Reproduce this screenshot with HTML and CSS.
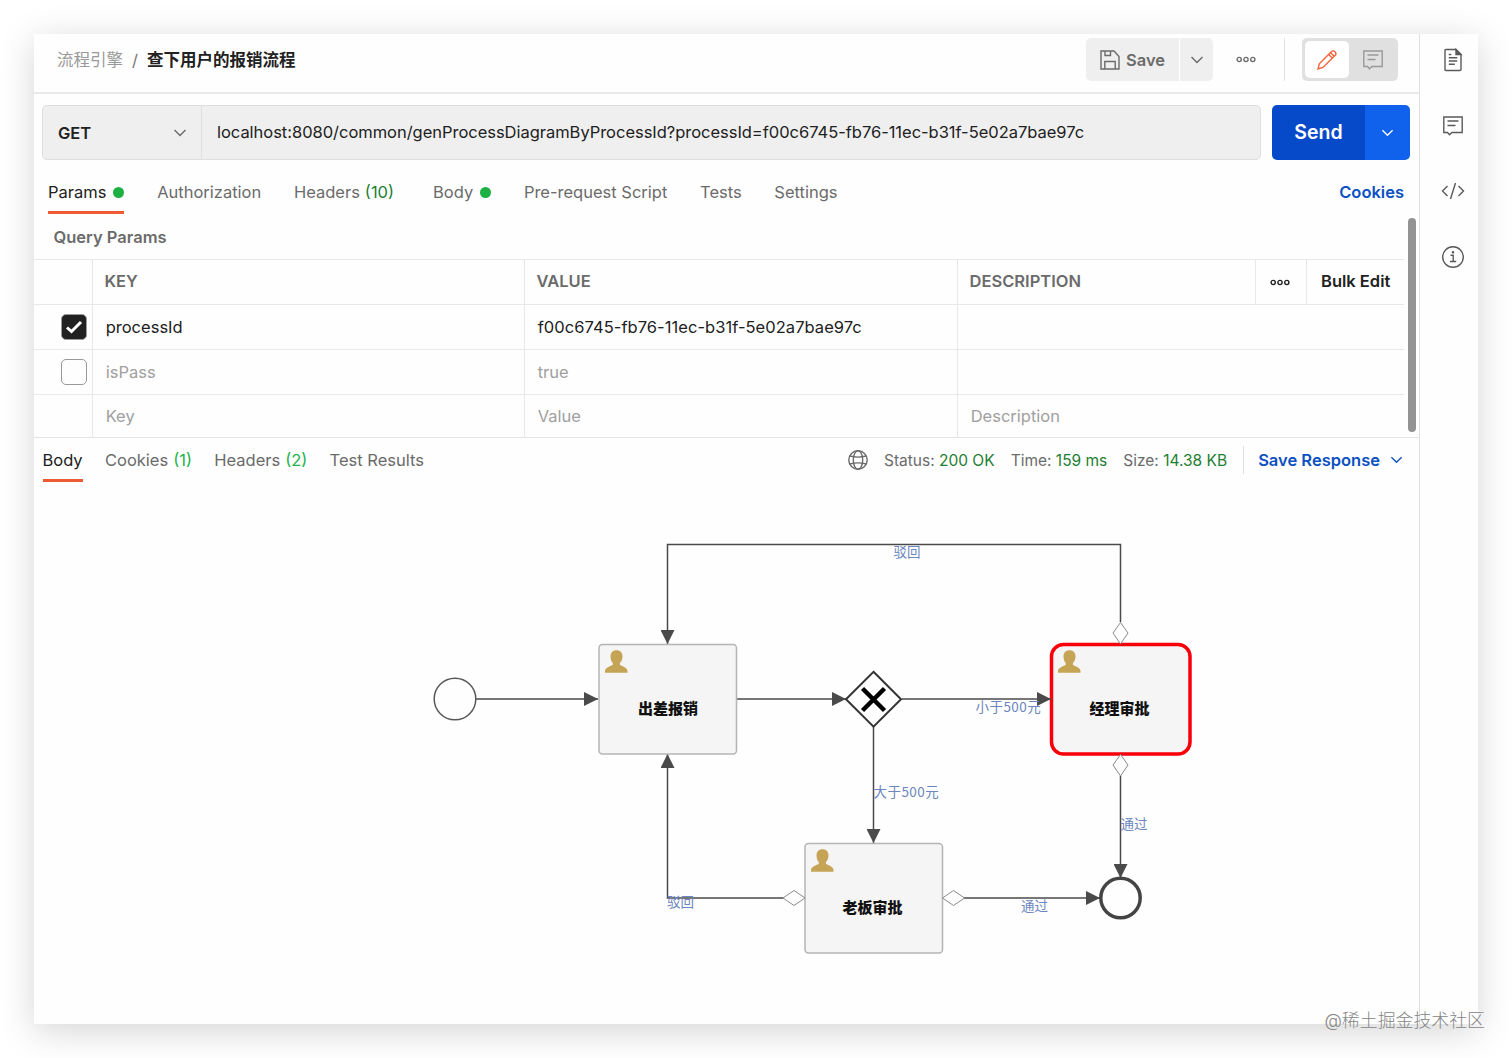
FILE: index.html
```html
<!DOCTYPE html>
<html lang="zh-CN">
<head>
    <meta charset="UTF-8">
    <meta name="viewport" content="width=device-width, initial-scale=1.0">
    <title>查下用户的报销流程</title>
    <link rel="stylesheet" href="styles.css">
</head>
<body>

    <div class="window">
        <main class="main">
            <header class="header">
                <div class="breadcrumb">
                    <span class="folder">流程引擎</span>
                    <span class="slash">/</span>
                    <span class="request-name">查下用户的报销流程</span>
                </div>
                <div class="header-actions">
                    <button class="save">
                        <svg width="20" height="20" viewBox="0 0 20 20"><path d="M1 1h13L19 6.500V19H1zM5 1v4.500h5.500V1M4.800 19v-7.500h10.400V19"/></svg>
                        Save
                    </button>
                    <button class="save-more"><svg width="14" height="8" viewBox="0 0 14 8"><path d="M1.500 1L7 6.500 12.500 1"/></svg></button>
                    <svg class="dots" width="20" height="7" viewBox="0 0 20 7"><circle cx="3.200" cy="3.500" r="2.100"/><circle cx="10" cy="3.500" r="2.100"/><circle cx="16.800" cy="3.500" r="2.100"/></svg>
                    <div class="mode">
                        <span class="mode-edit"><svg width="20" height="20" viewBox="0 0 20 20"><path d="M1 19l1.300-5.200L14.300 1.800c1-1 2.700-1 3.700 0s1 2.700 0 3.700L6 17.500zM11.700 4.400l3.800 3.800M13.600 2.700l3.600 3.600"/></svg></span>
                        <span class="mode-comment"><svg width="20" height="20" viewBox="0 0 20 20"><path d="M.8 1h18.400v15.500H9L6.500 18.700 4.500 16.500H.8zM4.500 5h11M4.500 9.500h8"/></svg></span>
                    </div>
                </div>
            </header>

            <div class="request-bar">
                <div class="request-input">
                    <div class="method">GET <svg width="14" height="8" viewBox="0 0 14 8"><path d="M1.500 1L7 6.500 12.500 1"/></svg></div>
                    <div class="url">localhost:8080/common/genProcessDiagramByProcessId?processId=f00c6745-fb76-11ec-b31f-5e02a7bae97c</div>
                </div>
                <div class="send">
                    <button class="send-main">Send</button>
                    <button class="send-more"><svg width="13" height="8" viewBox="0 0 14 8"><path d="M1.500 1L7 6.500 12.500 1"/></svg></button>
                </div>
            </div>

            <nav class="tabs">
                <span class="tab active">Params<i class="dot"></i></span>
                <span class="tab">Authorization</span>
                <span class="tab tab-headers">Headers <b class="count">(10)</b></span>
                <span class="tab">Body<i class="dot"></i></span>
                <span class="tab">Pre-request Script</span>
                <span class="tab">Tests</span>
                <span class="tab">Settings</span>
                <a class="cookies">Cookies</a>
            </nav>

            <section class="params">
                <div class="params-content">
                    <h2 class="params-title">Query Params</h2>
                    <div class="params-table">
                        <div class="row head">
                            <div></div>
                            <div>KEY</div>
                            <div>VALUE</div>
                            <div>DESCRIPTION</div>
                            <div class="col-dots"><svg class="dots" width="20" height="7" viewBox="0 0 20 7"><circle cx="3.200" cy="3.500" r="2.100"/><circle cx="10" cy="3.500" r="2.100"/><circle cx="16.800" cy="3.500" r="2.100"/></svg></div>
                            <div class="bulk">Bulk Edit</div>
                        </div>
                        <div class="row">
                            <div class="col-check"><span class="checkbox checked"><svg width="18" height="14" viewBox="0 0 18 14"><path d="M2 7.500l4.500 4L16 2"/></svg></span></div>
                            <div>processId</div>
                            <div class="value">f00c6745-fb76-11ec-b31f-5e02a7bae97c</div>
                            <div></div>
                        </div>
                        <div class="row muted">
                            <div class="col-check"><span class="checkbox"></span></div>
                            <div>isPass</div>
                            <div>true</div>
                            <div></div>
                        </div>
                        <div class="row muted last">
                            <div></div>
                            <div>Key</div>
                            <div>Value</div>
                            <div>Description</div>
                        </div>
                    </div>
                </div>
                <div class="scrollbar"></div>
            </section>

            <div class="response-bar">
                <span class="tab active">Body</span>
                <span class="tab">Cookies <b class="count">(1)</b></span>
                <span class="tab">Headers <b class="count">(2)</b></span>
                <span class="tab">Test Results</span>
                <div class="response-meta">
                    <svg class="globe" width="20" height="20" viewBox="0 0 20 20"><circle cx="10" cy="10" r="9.200"/><ellipse cx="10" cy="10" rx="4.700" ry="9.200"/><path d="M1.800 6q8.200 2.200 16.400 0M1.800 14q8.200-2.200 16.400 0"/></svg>
                    <span>Status: <b>200 OK</b></span>
                    <span>Time: <b>159 ms</b></span>
                    <span>Size: <b>14.38 KB</b></span>
                    <a class="save-response">Save Response <svg width="13" height="8" viewBox="0 0 14 8"><path d="M1.500 1L7 6.500 12.500 1"/></svg></a>
                </div>
            </div>

            <svg class="diagram" width="1385" height="542" viewBox="34 482 1385 542">
                <defs>
                    <marker id="arrow" markerUnits="userSpaceOnUse" markerWidth="15" markerHeight="14" refX="14" refY="7" orient="auto"><path class="arrow" d="M0 0L14 7 0 14z"/></marker>
                    <g id="user"><path class="user" d="M11.500 0c4 0 6 2.600 6 6.200 0 3-1.200 5.300-2.600 6.600v1.400c0 1.200 7.600 2.600 7.600 6.400V22.500H0v-1.900c0-3.800 7.800-5.200 7.800-6.400v-1.400C6.500 11.500 5.500 9.200 5.500 6.200 5.500 2.600 7.500 0 11.500 0z"/></g>
                </defs>

                <!-- flows -->
                <path class="flow" d="M476 699H598" marker-end="url(#arrow)"/>
                <path class="flow" d="M737 699H846" marker-end="url(#arrow)"/>
                <path class="flow" d="M873.500 727V843" marker-end="url(#arrow)"/>
                <path class="flow" d="M1120.500 622V544.500H667.500V644" marker-end="url(#arrow)"/>
                <path class="flow" d="M783 898H667.500V754" marker-end="url(#arrow)"/>
                <path class="flow" d="M964 898H1100" marker-end="url(#arrow)"/>
                <path class="flow" d="M1120.500 776V878" marker-end="url(#arrow)"/>

                <!-- events -->
                <circle class="start" cx="455" cy="699" r="20.800"/>
                <circle class="end" cx="1120.500" cy="898" r="19.700"/>

                <!-- gateway -->
                <path class="gateway" d="M873.500 671.800L901 699.200 873.500 726.600 846 699.200z"/>
                <path class="cross" d="M862.500 688.500L884.500 710.500M884.500 688.500L862.500 710.500"/>

                <!-- tasks -->
                <rect class="task" x="599" y="644.500" width="137.500" height="109.500" rx="3.500"/>
                <rect class="task" x="805" y="843.500" width="137.500" height="109.500" rx="3.500"/>
                <rect class="task current" x="1051.500" y="644.500" width="138.500" height="109.500" rx="12"/>
                <path class="flow" d="M902 699H1051" marker-end="url(#arrow)"/>
                <use href="#user" x="605" y="650.300"/>
                <use href="#user" x="811" y="849.300"/>
                <use href="#user" x="1058" y="650.300"/>
                <text class="task-name" x="668" y="713.500">出差报销</text>
                <text class="task-name" x="872.500" y="912.500">老板审批</text>
                <text class="task-name" x="1119.500" y="713.500">经理审批</text>

                <!-- conditional flow marks -->
                <path class="diamond" d="M1120.500 622.500L1113 633 1120.500 644 1128 633z"/>
                <path class="diamond" d="M1120.500 754.500L1113 765 1120.500 776 1128 765z"/>
                <path class="diamond" d="M783 898L794 890.500 805 898 794 905.500z"/>
                <path class="diamond" d="M942.500 898L953.500 890.500 964.500 898 953.500 905.500z"/>

                <text class="flow-name" x="893.500" y="557">驳回</text>
                <text class="flow-name spaced" x="975.500" y="712">小于500元</text>
                <text class="flow-name spaced" x="873.500" y="797">大于500元</text>
                <text class="flow-name" x="1120.500" y="829">通过</text>
                <text class="flow-name" x="667" y="907">驳回</text>
                <text class="flow-name" x="1021" y="911">通过</text>
            </svg>
        </main>

        <aside class="sidebar">
            <svg width="20" height="24" viewBox="0 0 20 24"><path d="M2 2.500q0-1 1-1h10L18 6.500v15q0 1-1 1H3q-1 0-1-1zM5.800 9.800h8.400M5.800 13h8.400M5.800 16.200h6M5.800 6.500h2.500"/><path class="fill" d="M13 1.500v5h5z"/></svg>
            <svg width="20" height="20" viewBox="0 0 20 20"><path d="M.8 1h18.400v15.500H9L6.500 18.700 4.500 16.500H.8zM4.500 5h11M4.500 9.500h8"/></svg>
            <svg width="24" height="18" viewBox="0 0 24 18"><path d="M6.500 4L1.500 9l5 5M17.500 4l5 5-5 5M14.500 1L9.500 17"/></svg>
            <svg width="24" height="24" viewBox="0 0 24 24"><circle cx="12" cy="12" r="10.300"/><path d="M9.500 10.200h2.700v6.300M9 16.500h6.200"/><circle class="fill" cx="12" cy="7.300" r=".6"/></svg>
        </aside>
    </div>

    <div class="watermark">@稀土掘金技术社区</div>

</body>
</html>
```
FILE: styles.css
```css
* { box-sizing: border-box; }
body { margin: 0; width: 1512px; height: 1058px; overflow: hidden; padding: 34px; background: #fff; font-family: Inter, "Noto Sans CJK SC", sans-serif; font-size: 16.5px; line-height: 20px; color: #6b6b6b; }
svg { display: block; flex: none; fill: none; stroke: currentColor; stroke-width: 1.4; }
button { border: 0; padding: 0; font: inherit; color: inherit; background: none; display: flex; align-items: center; justify-content: center; }
b { font-weight: 400; }

.window { width: 1444px; height: 990px; display: flex; background: #fefefe; box-shadow: 0 7px 34px rgba(0, 0, 0, 0.17); }
.main { width: 1386px; display: flex; flex-direction: column; border-right: 1px solid #e0e0e0; }

.header { height: 60px; flex: none; padding: 1px 21px 8px 23px; display: flex; align-items: center; justify-content: space-between; border-bottom: 2px solid #e9e9e9; }
.breadcrumb { display: flex; gap: 9px; }
.folder { color: #999; }
.slash { color: #777; }
.request-name { color: #212121; font-weight: 600; }
.header-actions { display: flex; align-items: center; height: 43px; }
.save { width: 93px; height: 43px; gap: 6px; background: #efefef; border-radius: 5px 0 0 5px; font-weight: 600; }
.save-more { width: 33px; height: 43px; margin-left: 1px; background: #efefef; border-radius: 0 5px 5px 0; }
.header-actions .dots { margin: 0 29px 0 23px; }
.mode { display: flex; position: relative; width: 96px; height: 43px; margin-left: 17px; padding: 3px 2px 3px 3px; background: #e0e0e0; border-radius: 5px; }
.mode::before { content: ""; position: absolute; left: -18px; top: 0; width: 1px; height: 43px; background: #e3e3e3; }
.mode span { width: 44px; display: flex; align-items: center; justify-content: center; }
.mode .mode-edit { background: #fff; border-radius: 5px; color: #f4623a; }
.mode .mode-comment { width: 47px; color: #999; }

.request-bar { margin: 11px 9px 0 8px; height: 55px; flex: none; display: flex; justify-content: space-between; }
.request-input { width: 1219px; display: flex; align-items: center; background: #efefef; border: 1px solid #dedede; border-radius: 5px; color: #212121; }
.method { width: 159px; height: 53px; padding: 0 14px 0 15px; display: flex; align-items: center; justify-content: space-between; border-right: 1px solid #dedede; font-weight: 600; }
.method svg { color: #6b6b6b; }
.url { padding: 0 0 2px 15px; letter-spacing: -0.03px; }
.send { display: flex; border-radius: 5px; overflow: hidden; color: #fff; }
.send-main { width: 93px; padding-bottom: 1px; background: #074ac9; font-size: 19.5px; font-weight: 600; }
.send-more { width: 45px; background: #1062ec; }

.tabs { height: 54px; flex: none; padding: 0 15px 0 14px; display: flex; align-items: stretch; }
.tab { display: flex; align-items: center; gap: 5px; padding-top: 12px; border-bottom: 3px solid transparent; white-space: nowrap; }
.tabs .tab { margin-right: 32.7px; }
.tabs .tab-headers { margin-right: 39px; }
.tab.active { color: #212121; border-color: #ee5b33; }
.dot { width: 11px; height: 11px; border-radius: 50%; background: #1bb041; margin: 1px 0 0 2px; }
.count { color: #1d7f32; }
.cookies { margin-left: auto; padding-top: 22px; color: #0c50c2; font-weight: 600; }

.params { height: 224px; flex: none; display: flex; border-bottom: 1px solid #e3e3e3; }
.params-content { width: 1370px; }
.params-title { margin: 0; height: 44px; padding: 13px 0 0 19.5px; font-size: 16.5px; line-height: 20px; font-weight: 600; }
.params-table { border-top: 1px solid #e8e8e8; margin-top: 1px; }
.row { height: 45px; display: grid; grid-template-columns: 58px 432px 433px 1fr; border-bottom: 1px solid #e8e8e8; color: #212121; }
.row > div { padding: 0 0 1px 12.7px; display: flex; align-items: center; }
.row > div + div { border-left: 1px solid #e8e8e8; }
.row.head { grid-template-columns: 58px 432px 433px 298px 51px 1fr; color: #6b6b6b; font-weight: 600; }
.row.head > div { padding: 0 0 2px 11.5px; }
.row.head .bulk, .row .col-dots { color: #212121; }
.row.head .bulk { padding-left: 14px; }
.row.head .col-dots { padding: 0 0 0 14px; }
.row.muted { color: #a0a0a0; }
.row.last { height: 43px; border-bottom: 0; }
.row .col-check { padding: 0 0 0 27px; }
.row .value { letter-spacing: 0.05px; }
.checkbox { width: 26px; height: 26px; border: 1.5px solid #999; border-radius: 5px; display: flex; align-items: center; justify-content: center; }
.checkbox.checked { background: #212121; color: #fff; }
.checkbox svg { stroke-width: 3; }
.scrollbar { width: 8.5px; height: 214px; margin: 4px 0 0 3.5px; border-radius: 5px; background: #939393; }

.response-bar { height: 44px; flex: none; padding: 0 16px 0 8.5px; display: flex; align-items: stretch; }
.response-bar .tab { margin-right: 22.3px; padding-top: 3px; }
.response-bar .count { color: #21b24b; }
.response-meta { margin-left: auto; display: flex; align-items: center; gap: 16px; font-size: 15.5px; }
.response-meta b { color: #1d7f32; }
.response-meta span { padding-top: 1px; }
.save-response { display: flex; align-items: center; gap: 10px; height: 28px; padding-left: 14px; border-left: 1px solid #e0e0e0; color: #0c50c2; font-size: 16.5px; font-weight: 600; }

.diagram { stroke: none; }
.flow { fill: none; stroke: #4a4a4a; stroke-width: 1.5; }
.arrow { fill: #4a4a4a; stroke: none; }
.user { fill: #c6a455; stroke: none; }
.start { fill: #fefefe; stroke: #585858; stroke-width: 1.5; }
.end { fill: #fefefe; stroke: #444; stroke-width: 3.5; }
.gateway { fill: #fefefe; stroke: #333; stroke-width: 2; }
.cross { stroke: #000; stroke-width: 4.5; }
.task { fill: #f5f5f5; stroke: #b5b5b5; stroke-width: 1.5; }
.task.current { stroke: #f80009; stroke-width: 3.5; }
.diamond { fill: #fefefe; stroke: #8a8a8a; stroke-width: 1; }
.task-name { font: 900 15px "Noto Sans CJK SC", sans-serif; fill: #111; text-anchor: middle; }
.flow-name { font: 13.5px "Noto Sans CJK SC", sans-serif; fill: #6c86c0; }
.flow-name.spaced { letter-spacing: 0.45px; }

.sidebar { width: 58px; padding: 14px 0 0 8px; display: flex; flex-direction: column; align-items: center; color: #5a5a5a; }
.sidebar svg { margin-bottom: 44px; }
.sidebar svg:nth-child(2) { margin-bottom: 46px; }
.sidebar svg:nth-child(3) { margin-bottom: 45px; }
.sidebar .fill { fill: currentColor; }

.watermark { position: absolute; right: 27px; top: 1011px; font-size: 17.9px; font-weight: 300; color: #858585; }
```
